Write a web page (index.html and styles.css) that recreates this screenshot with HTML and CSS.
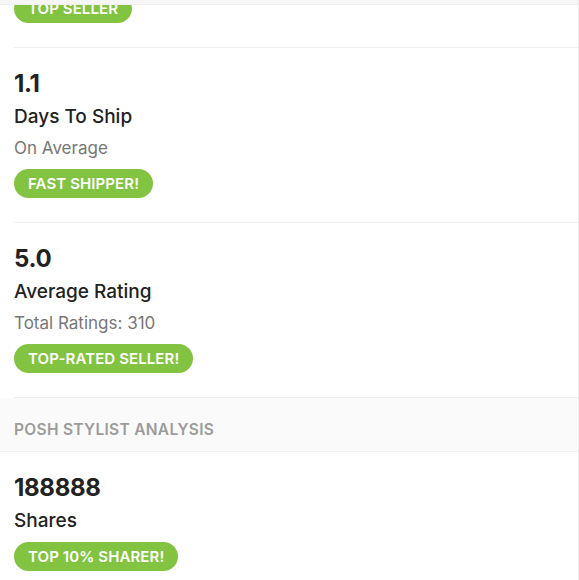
FILE: index.html
```html
<!DOCTYPE html>
<html>
<head>
<meta charset="utf-8">
<link rel="stylesheet" href="styles.css">
</head>
<body>
<div class="edge"></div>
<main class="page">
  <section class="stat first">
    <span class="badge">TOP SELLER</span>
  </section>
  <section class="stat">
    <div class="num">1.1</div>
    <div class="label">Days To Ship</div>
    <div class="sub">On Average</div>
    <span class="badge">FAST SHIPPER!</span>
  </section>
  <section class="stat">
    <div class="num">5.0</div>
    <div class="label">Average Rating</div>
    <div class="sub">Total Ratings: 310</div>
    <span class="badge">TOP-RATED SELLER!</span>
  </section>
  <div class="band">POSH STYLIST ANALYSIS</div>
  <section class="stat last">
    <div class="num">188888</div>
    <div class="label">Shares</div>
    <span class="badge">TOP 10% SHARER!</span>
  </section>
</main>
</body>
</html>
```

FILE: styles.css
```css
html, body {
  margin: 0;
  padding: 0;
  background: #fff;
  font-family: Inter, "Open Sans", sans-serif;
  color: #222;
}
.edge {
  position: fixed;
  top: 0;
  left: 0;
  width: 578px;
  height: 4px;
  background: #f6f6f6;
  border-bottom: 1px solid #efefef;
  z-index: 2;
}
.page {
  width: 578px;
  border-right: 1px solid #ececec;
  margin-top: -6px;
  min-height: 600px;
}
.stat {
  margin-left: 14px;
  padding: 22px 0 24px;
  border-bottom: 1px solid #eeeeee;
  display: flex;
  flex-direction: column;
  align-items: flex-start;
}
.stat.first {
  padding-top: 0;
}
.stat.last {
  border-bottom: none;
}
.num {
  font-size: 24px;
  font-weight: 700;
  line-height: 28px;
  letter-spacing: -0.3px;
  color: #222;
}
.label {
  margin-top: 8px;
  font-size: 19px;
  font-weight: 500;
  line-height: 22px;
  color: #222;
}
.sub {
  margin-top: 9px;
  font-size: 17px;
  line-height: 22px;
  color: #777;
}
.badge {
  margin-top: 10px;
  display: inline-block;
  height: 29px;
  line-height: 29px;
  padding: 0 14px;
  border-radius: 15px;
  background: #82c341;
  color: #fff;
  font-size: 15px;
  font-weight: 600;
  letter-spacing: 0.1px;
}
.stat.first .badge {
  margin-top: 0;
}
.band {
  box-sizing: border-box;
  background: #fafafa;
  border-bottom: 1px solid #f0f0f0;
  height: 54px;
  padding: 21px 0 0 14px;
  line-height: 22px;
  color: #9b9b9b;
  font-size: 15.5px;
  font-weight: 600;
  letter-spacing: 0.3px;
}
```
